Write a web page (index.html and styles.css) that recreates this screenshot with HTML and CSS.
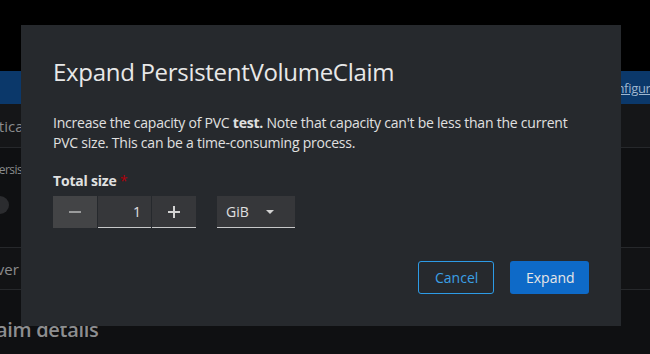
FILE: index.html
```html
<!DOCTYPE html>
<html lang="en">

<head>
  <meta charset="UTF-8">
  <meta name="viewport" content="width=device-width, initial-scale=1.0">
  <title>Expand PersistentVolumeClaim</title>
  <link rel="stylesheet" href="styles.css">
</head>

<body>
  <!-- Page behind the backdrop -->
  <header class="masthead"></header>

  <div class="banner">
    <a href="#" class="banner-link">Configuration</a>
  </div>

  <div class="page">
    <div class="row row-tabs"><span class="cut cut-tabs">Authentication</span></div>
    <div class="row row-body">
      <span class="cut cut-persist">Persistent</span>
      <span class="toggle-dot"></span>
    </div>
    <div class="row row-server"><span class="cut cut-server">Server</span></div>
    <h2 class="page-heading"><span class="cut cut-heading">PersistentVolumeClaim details</span></h2>
  </div>

  <!-- Modal -->
  <div class="modal" role="dialog" aria-labelledby="modal-title">
    <h1 class="modal-title" id="modal-title">Expand PersistentVolumeClaim</h1>

    <p class="modal-text">
      Increase the capacity of PVC <strong>test.</strong> Note that capacity can't be less than the current
      PVC size. This can be a time-consuming process.
    </p>

    <label class="field-label" for="size">Total size <span class="required">*</span></label>
    <div class="size-row">
      <div class="number-input">
        <button class="step step-minus" aria-label="Minus"><span class="bar"></span></button>
        <input type="text" id="size" class="number-field" value="1">
        <button class="step step-plus" aria-label="Plus"><span class="bar"></span><span class="bar bar-v"></span></button>
      </div>
      <button class="unit-select">
        <span>GiB</span>
        <span class="caret"></span>
      </button>
    </div>

    <div class="modal-footer">
      <button class="btn btn-secondary">Cancel</button>
      <button class="btn btn-primary">Expand</button>
    </div>
  </div>
</body>

</html>
```

FILE: styles.css
```css
/* Reset and base styles */
body,
h1,
h2,
p {
  margin: 0;
  padding: 0;
}

body {
  background: #0f1012;
  color: #8a8b8d;
  font-family: 'Open Sans', sans-serif;
  font-size: 14px;
  height: 354px;
  overflow: hidden;
  position: relative;
}

/* Background page (already dimmed by the backdrop) */
.masthead {
  height: 71px;
  background: #000;
}

.banner {
  height: 33px;
  background: #0b386a;
  display: flex;
  align-items: center;
  padding-left: 601px;
  white-space: nowrap;
  overflow: hidden;
}

.banner-link {
  color: #9eb6cf;
  font-size: 13px;
  letter-spacing: -0.3px;
}

.row {
  border-bottom: 1px solid #26282b;
  white-space: nowrap;
  overflow: hidden;
}

.row-tabs {
  height: 43px;
  background: #151618;
  display: flex;
  align-items: center;
}

.row-body {
  height: 100px;
  display: flex;
  flex-direction: column;
  padding-top: 13px;
  box-sizing: border-box;
}

.row-server {
  height: 41px;
  background: #121315;
  display: flex;
  align-items: center;
}

.cut {
  display: inline-block;
}

.cut-tabs {
  margin-left: -52px;
  font-size: 15px;
}

.cut-persist {
  margin-left: -8px;
  font-size: 12px;
  letter-spacing: -0.5px;
}

.toggle-dot {
  display: block;
  width: 18px;
  height: 18px;
  border-radius: 50%;
  background: #2b2c2f;
  margin: 18px 0 0 -9px;
}

.cut-server {
  margin-left: -26px;
  font-size: 15px;
}

.page-heading {
  font-size: 20px;
  font-weight: 600;
  color: #8d8e90;
  padding-top: 26px;
  white-space: nowrap;
  overflow: hidden;
}

.cut-heading {
  margin-left: -188px;
  letter-spacing: -0.3px;
}

/* Modal */
.modal {
  position: absolute;
  left: 21px;
  top: 25px;
  width: 600px;
  height: 301px;
  box-sizing: border-box;
  padding: 32px;
  background: #26292d;
  color: #e0e0e0;
  display: flex;
  flex-direction: column;
}

.modal-title {
  font-size: 24px;
  font-weight: 400;
  line-height: 30px;
  letter-spacing: -0.3px;
  color: #e8e8e8;
  margin-bottom: 26px;
}

.modal-text {
  line-height: 20px;
  letter-spacing: -0.23px;
  margin-bottom: 18px;
}

.modal-text strong {
  font-weight: 700;
}

.field-label {
  font-weight: 700;
  line-height: 20px;
  letter-spacing: -0.2px;
  margin-bottom: 5px;
}

.required {
  color: #b1000b;
  font-weight: 400;
}

.size-row {
  display: flex;
  gap: 21px;
}

.number-input {
  display: flex;
  gap: 1px;
}

.step,
.number-field,
.unit-select {
  height: 32px;
  border: none;
  box-sizing: border-box;
  font-family: inherit;
  font-size: 14px;
  color: #e0e0e0;
  padding: 0;
}

.step {
  width: 44px;
  background: #36373a;
  border-bottom: 1px solid #c6c7c8;
  position: relative;
  cursor: pointer;
}

.step-minus {
  background: #434446;
  border-bottom: none;
}

.bar {
  position: absolute;
  left: 16px;
  top: 15px;
  width: 12px;
  height: 2px;
  background: #d2d2d2;
}

.step-minus .bar {
  background: #9a9b9c;
}

.bar-v {
  left: 21px;
  top: 10px;
  width: 2px;
  height: 12px;
}

.number-field {
  width: 53px;
  background: #36373a;
  border-bottom: 1px solid #c6c7c8;
  text-align: right;
  padding-right: 10px;
  outline: none;
}

.unit-select {
  width: 78px;
  background: #36373a;
  border-bottom: 1px solid #c6c7c8;
  display: flex;
  align-items: center;
  padding-left: 9px;
  cursor: pointer;
}

.caret {
  margin-left: 17px;
  width: 0;
  height: 0;
  border-left: 4px solid transparent;
  border-right: 4px solid transparent;
  border-top: 4px solid #d2d2d2;
}

.modal-footer {
  margin-top: auto;
  display: flex;
  justify-content: flex-end;
  gap: 16px;
}

.btn {
  height: 33px;
  border-radius: 3px;
  font-family: inherit;
  font-size: 14px;
  padding: 0 16px;
  box-sizing: border-box;
  cursor: pointer;
}

.btn-secondary {
  width: 76px;
  background: transparent;
  border: 1px solid #2d9be6;
  color: #3ba0e6;
}

.btn-primary {
  width: 79px;
  background: #0e6ac8;
  border: none;
  color: #e6e6e6;
}
```
